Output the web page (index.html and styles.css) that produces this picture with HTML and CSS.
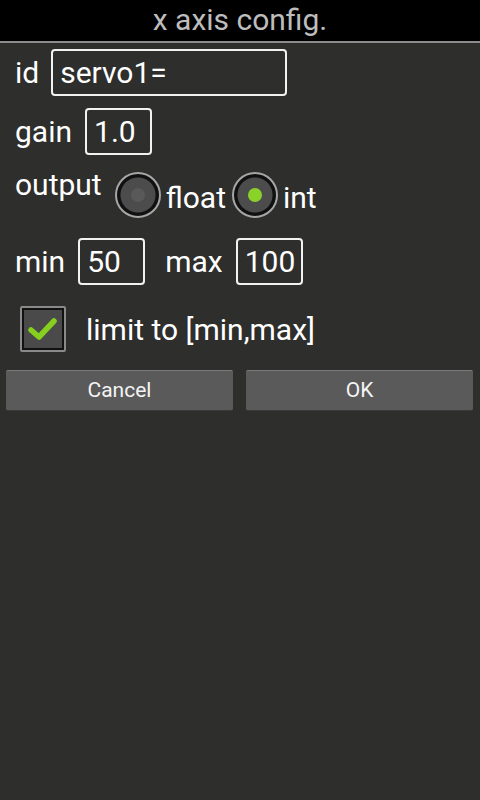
FILE: index.html
```html
<!DOCTYPE html>
<html>
<head>
<meta charset="utf-8">
<link rel="stylesheet" href="styles.css">
</head>
<body>
<div class="titlebar">x axis config.</div>
<div class="content">
  <div class="row row-id">
    <span class="label">id</span>
    <div class="field field-id">servo1=</div>
  </div>
  <div class="row row-gain">
    <span class="label">gain</span>
    <div class="field field-small">1.0</div>
  </div>
  <div class="row row-output">
    <span class="label label-top">output</span>
    <div class="radios">
      <span class="radio"><span class="dot"></span></span>
      <span class="opt">float</span>
      <span class="radio checked"><span class="dot"></span></span>
      <span class="opt">int</span>
    </div>
  </div>
  <div class="row row-minmax">
    <span class="label">min</span>
    <div class="field field-small">50</div>
    <span class="label label-max">max</span>
    <div class="field field-small">100</div>
  </div>
  <div class="row row-check">
    <span class="checkbox">
      <svg width="30" height="26" viewBox="0 0 30 26"><path d="M3 14 L11 21 L26 5" fill="none" stroke="#86cf1f" stroke-width="5.5" stroke-linecap="round" stroke-linejoin="round"/></svg>
    </span>
    <span class="label">limit to [min,max]</span>
  </div>
  <div class="buttons">
    <div class="btn">Cancel</div>
    <div class="btn">OK</div>
  </div>
</div>
</body>
</html>
```
FILE: styles.css
```css
html, body {
  margin: 0;
  padding: 0;
}
body {
  width: 480px;
  height: 800px;
  background: #2e2e2c;
  font-family: Roboto, "Liberation Sans", sans-serif;
  color: #ffffff;
  overflow: hidden;
}
.titlebar {
  height: 41px;
  background: #000;
  border-bottom: 2px solid #8c8c8c;
  color: #bdbdbd;
  font-size: 30px;
  line-height: 40px;
  text-align: center;
}
.content {
  padding: 6px 0 0 0;
}
.row {
  display: flex;
  align-items: center;
  padding-left: 15px;
}
.label {
  font-size: 30px;
  line-height: 47px;
}
.field {
  box-sizing: border-box;
  height: 47px;
  border: 2px solid #f2f2f2;
  border-radius: 4px;
  font-size: 30px;
  line-height: 43px;
  padding-left: 7px;
}
.field-id {
  width: 236px;
  margin-left: 12px;
}
.row-gain {
  margin-top: 12px;
}
.row-gain .field {
  margin-left: 13px;
}
.field-small {
  width: 67px;
}
.row-output {
  margin-top: 12px;
  align-items: flex-start;
  height: 58px;
}
.label-top {
  line-height: 36px;
}
.radios {
  display: flex;
  align-items: center;
  margin-left: 13px;
  margin-top: 5px;
}
.radio {
  box-sizing: border-box;
  width: 46px;
  height: 46px;
  border-radius: 50%;
  border: 2px solid #a6a6a6;
  background: radial-gradient(circle, #4c4c4c 0, #4c4c4c 17px, #111 18px);
  box-shadow: inset 0 0 0 2px #111;
  display: flex;
  align-items: center;
  justify-content: center;
}
.radio .dot {
  width: 14px;
  height: 14px;
  border-radius: 50%;
  background: #595959;
}
.radio.checked .dot {
  background: #8ad22a;
}
.opt {
  font-size: 30px;
  margin-left: 5px;
  margin-right: 6px;
  padding-top: 5px;
}
.row-minmax {
  margin-top: 13px;
}
.row-minmax .field {
  margin-left: 13px;
}
.label-max {
  margin-left: 20px;
}
.row-check {
  margin-top: 21px;
  padding-left: 20px;
  height: 46px;
}
.checkbox {
  box-sizing: border-box;
  width: 46px;
  height: 46px;
  border: 2px solid #8a8a8a;
  border-radius: 2px;
  background: #4a4a4a;
  box-shadow: inset 0 0 0 2px #111;
  display: flex;
  align-items: center;
  justify-content: center;
  margin-right: 20px;
}
.buttons {
  display: flex;
  gap: 13px;
  padding: 0 7px 0 6px;
  margin-top: 18px;
}
.btn {
  flex: 1;
  height: 41px;
  background: #5a5a5a;
  border-top: 1px solid #7a7a7a;
  border-bottom: 1px solid #3a3a3a;
  box-sizing: border-box;
  border-radius: 2px;
  font-size: 21px;
  line-height: 39px;
  text-align: center;
  color: #f4f4f4;
}
```
